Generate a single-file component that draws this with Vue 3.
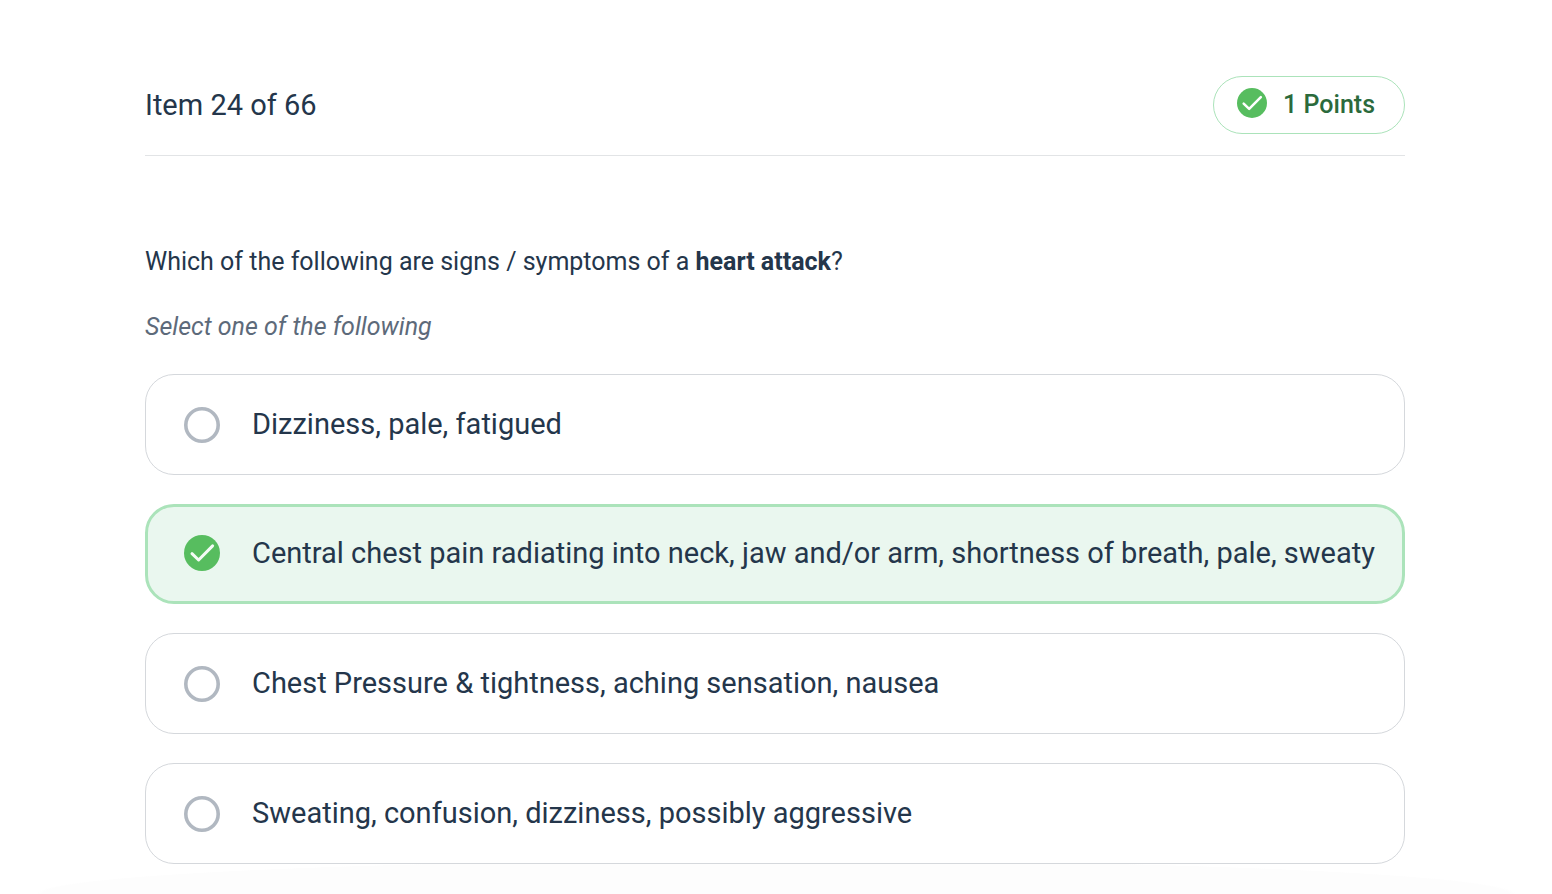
<script setup>
import { ref } from 'vue'

const selected = ref(1)
const answers = [
  'Dizziness, pale, fatigued',
  'Central chest pain radiating into neck, jaw and/or arm, shortness of breath, pale, sweaty',
  'Chest Pressure & tightness, aching sensation, nausea',
  'Sweating, confusion, dizziness, possibly aggressive',
]
</script>

<template>
  <main class="quiz">
    <header class="head">
      <h1 class="progress">Item 24 of 66</h1>
      <div class="points">
        <svg class="points-icon" viewBox="0 0 36 36" aria-hidden="true">
          <circle cx="18" cy="18" r="18" fill="#57bd5f" />
          <path class="tick" d="M8 18.700L14.600 25L28.600 10.900" stroke="#fff" />
        </svg>
        <span class="text">1 Points</span>
      </div>
    </header>
    <fieldset class="question">
      <legend class="prompt">Which of the following are signs / symptoms of a <strong>heart attack</strong>?</legend>
      <p class="hint">Select one of the following</p>
      <div class="answers">
        <label v-for="(answer, i) in answers" :key="i" class="answer" :class="{ chosen: selected === i }">
          <input v-model="selected" class="native" type="radio" name="answer" :value="i" />
          <svg class="mark" viewBox="0 0 36 36" aria-hidden="true">
            <template v-if="selected === i">
              <circle cx="18" cy="18" r="18" fill="#57bd5f" />
              <path class="tick" d="M8 18.700L14.600 25L28.600 10.900" stroke="#f4fbf6" />
            </template>
            <circle v-else cx="18" cy="18" r="16.200" fill="#fff" stroke="#b1b8c1" stroke-width="3.600" />
          </svg>
          <span class="text">{{ answer }}</span>
        </label>
      </div>
    </fieldset>
  </main>
</template>

<style>
body {
  background: #fff;
}
</style>

<style scoped>
.quiz {
  box-sizing: border-box;
  min-height: 100vh;
  padding: 76px 147px 30px 145px;
  background: radial-gradient(ellipse 740px 34px at 50% 100%, #fdfdfd 99%, #fff 100%);
  font-family: Roboto, "Liberation Sans", sans-serif;
  color: #24364b;
}
.head {
  display: flex;
  align-items: center;
  justify-content: space-between;
  padding-bottom: 21px;
  border-bottom: 1px solid #e2e4e6;
}
.progress {
  margin: 0;
  font-size: 29px;
  font-weight: 400;
  line-height: 36px;
}
.points {
  box-sizing: border-box;
  display: flex;
  align-items: center;
  gap: 16px;
  height: 58px;
  padding: 0 29px 0 23px;
  border: 1px solid #abe3ba;
  border-radius: 29px;
  font-size: 25px;
  font-weight: 500;
  color: #2b6a3c;
}
.points-icon {
  width: 30px;
  height: 30px;
  margin-bottom: 4px;
}
.tick {
  fill: none;
  stroke-width: 3px;
  stroke-linecap: round;
  stroke-linejoin: round;
}
.text {
  padding-bottom: 2px;
}
.question {
  min-width: 0;
  margin: 0;
  padding: 88px 0 0;
  border: 0;
}
.prompt {
  float: left;
  width: 100%;
  padding: 0;
  font-size: 25px;
  line-height: 36px;
}
.hint {
  clear: both;
  margin: 0;
  padding-top: 29px;
  font-size: 25px;
  line-height: 36px;
  font-style: italic;
  color: #5d6a7a;
}
.answers {
  display: grid;
  gap: 29px;
  margin-top: 29px;
}
.answer {
  box-sizing: border-box;
  position: relative;
  display: flex;
  align-items: center;
  gap: 32px;
  min-height: 101px;
  padding: 0 24px 0 38px;
  border: 1px solid #d5d8dc;
  border-radius: 29px;
  background: #fff;
  font-size: 29px;
  line-height: 36px;
  cursor: pointer;
}
.chosen {
  min-height: 100px;
  padding: 0 22px 0 36px;
  border: 3px solid #abe3ba;
  background: #eaf7ef;
}
.native {
  position: absolute;
  opacity: 0;
}
.mark {
  flex: none;
  width: 36px;
  height: 36px;
}
.chosen .mark {
  margin-bottom: 2px;
}
</style>
